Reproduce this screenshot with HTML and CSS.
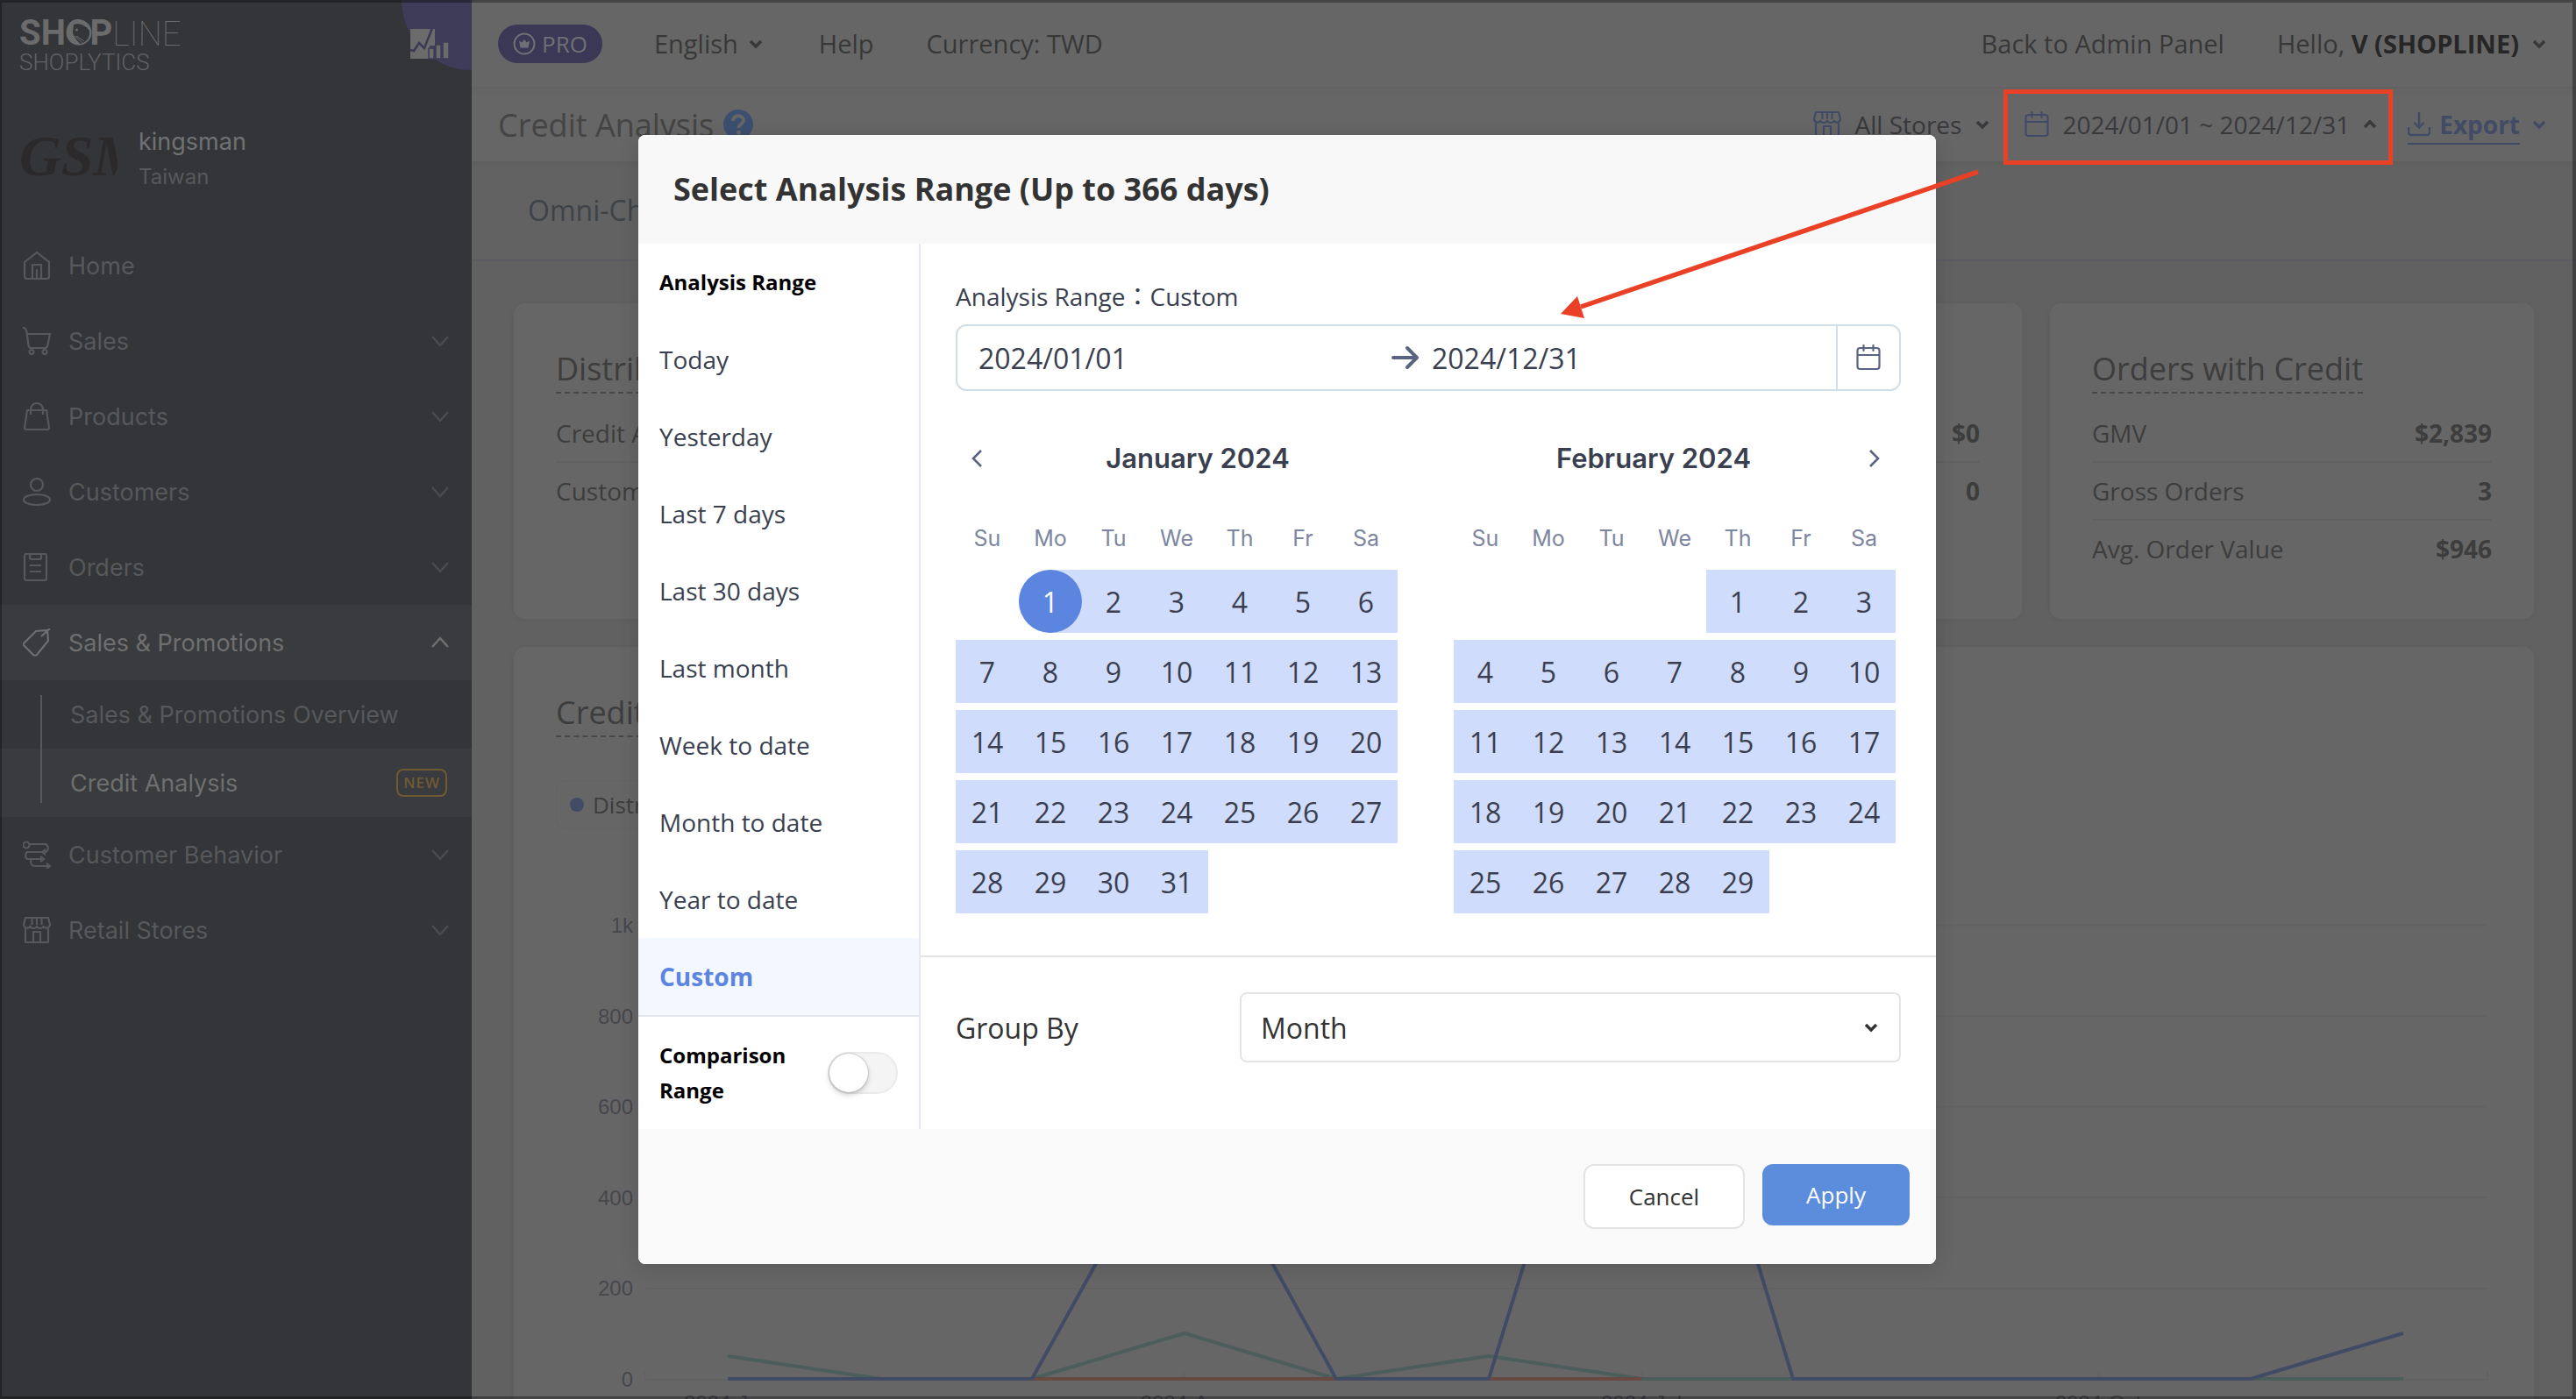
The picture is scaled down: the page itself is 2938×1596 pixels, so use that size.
FILE: index.html
```html
<!DOCTYPE html>
<html lang="en">
<head>
<meta charset="utf-8">
<title>Credit Analysis - Shoplytics</title>
<link rel="stylesheet" href="styles.css">
</head>
<body>
<svg class="defs" aria-hidden="true">
  <symbol id="chev-down" viewBox="0 0 20 20"><path d="M1 5l9 10 9-10" fill="none" stroke="currentColor" stroke-width="2.5"/></symbol>
  <symbol id="chev-up" viewBox="0 0 20 20"><path d="M1 15l9-10 9 10" fill="none" stroke="currentColor" stroke-width="2.5"/></symbol>
  <symbol id="caret-down" viewBox="0 0 16 16"><path d="M2 5l6 6 6-6" fill="none" stroke="currentColor" stroke-width="3.4"/></symbol>
  <symbol id="caret-up" viewBox="0 0 16 16"><path d="M2 11l6-6 6 6" fill="none" stroke="currentColor" stroke-width="3.4"/></symbol>
  <symbol id="store" viewBox="0 0 32 32"><g fill="none" stroke="currentColor" stroke-width="2.2" stroke-linejoin="round"><path d="M3 2h26l2 8a4.200 4.200 0 0 1-7.500 2 4.500 4.500 0 0 1-7.500 0 4.500 4.500 0 0 1-7.500 0A4.200 4.200 0 0 1 1 10z"/><path d="M10.500 2v8M16 2v8M21.500 2v8M3 14v16h26V14M12 30V18h8v12"/></g></symbol>
  <symbol id="calendar" viewBox="0 0 28 30"><g fill="none" stroke="currentColor" stroke-width="2.200" stroke-linecap="round"><rect x="1.500" y="4" width="25" height="24" rx="3"/><path d="M2 12h24M8.500 1v6M19.500 1v6"/></g></symbol>
</svg>

<div class="app">
  <aside class="sidebar">
    <header class="side-head">
      <div class="logo">
        <div class="logo-main"><b>SHOP</b><span>LINE</span><svg class="face" viewBox="0 0 30 30" aria-hidden="true"><circle cx="15" cy="15" r="14.500" fill="#6b6b6c"/><path d="M9 6c5-2 13 0 18 7 1 7-3 13-10 15-3-2-7-7-9-12z" fill="#343538"/><circle cx="12.500" cy="12" r="1.500" fill="#6b6b6c"/><path d="M10 19l9 8M12 19l9 6" stroke="#6b6b6c"/></svg></div>
        <div class="logo-sub">SHOPLYTICS</div>
      </div>
      <svg class="corner" viewBox="0 0 80 80" aria-hidden="true">
        <path d="M0 0h80v80C36 80 0 44 0 0z" fill="#3e3c58"/>
        <path d="M10 33h28v19h-6v15H10z" fill="#6b6b6c"/>
        <path d="M10 57l4 1 6-9 6 6 9-23" fill="none" stroke="#3c3a56" stroke-width="2.500"/>
        <path d="M31 55h6v12h-6zM39 51h6v16h-6zM47 48h7v19h-7z" fill="#6b6b6c" stroke="#3e3c58" stroke-width="1.500"/>
      </svg>
    </header>
    <div class="brand">
      <div class="brand-pic">GSM</div>
      <div><div class="brand-name">kingsman</div><div class="brand-place">Taiwan</div></div>
    </div>
    <nav>
      <a class="item" href="#"><svg class="ico" viewBox="0 0 32 32"><path d="M2 12L16 1l14 11v16a3 3 0 0 1-3 3H5a3 3 0 0 1-3-3zM11 31V15h10v16M16 20v11" /></svg><span>Home</span></a>
      <a class="item" href="#"><svg class="ico" viewBox="0 0 32 32"><path d="M0 1c3 0 4 2 4.500 5l2 15c.2 2 1 3 3 3H25c2 0 3-1 3.300-3L31 8H5"/><circle cx="10" cy="28.500" r="2.500"/><circle cx="25" cy="28.500" r="2.500"/></svg><span>Sales</span><svg class="chev"><use href="#chev-down"/></svg></a>
      <a class="item" href="#"><svg class="ico" viewBox="0 0 32 32"><path d="M5 9h22l3 20a2 2 0 0 1-2 2H4a2 2 0 0 1-2-2zM9 14V8a7 7 0 0 1 14 0v6"/></svg><span>Products</span><svg class="chev"><use href="#chev-down"/></svg></a>
      <a class="item" href="#"><svg class="ico" viewBox="0 0 32 32"><circle cx="16" cy="8" r="7"/><ellipse cx="16" cy="25" rx="15" ry="6"/></svg><span>Customers</span><svg class="chev"><use href="#chev-down"/></svg></a>
      <a class="item" href="#"><svg class="ico" viewBox="0 0 32 32"><rect x="2" y="1" width="25" height="30" rx="2"/><path d="M8 1v4a2 2 0 0 0 2 2h9a2 2 0 0 0 2-2V1M8 14h13M8 21h13"/></svg><span>Orders</span><svg class="chev"><use href="#chev-down"/></svg></a>
      <a class="item open" href="#"><svg class="ico" viewBox="0 0 32 32"><path d="M1 17L15 3l13-1 1 12-13 16c-1 1-3 1-4 0L1 19c-1-1-1-1 0-2zM31 0L21 9"/></svg><span>Sales &amp; Promotions</span><svg class="chev"><use href="#chev-up"/></svg></a>
      <div class="submenu">
        <a class="sub" href="#">Sales &amp; Promotions Overview</a>
        <a class="sub current" href="#">Credit Analysis<span class="new">NEW</span></a>
      </div>
      <a class="item" href="#"><svg class="ico" viewBox="0 0 32 32"><circle cx="4" cy="5" r="3.500"/><path d="M8 4h18a5 5 0 0 1 0 9h-3M26 10l-4 3 4 3M21 13H5a5 5 0 0 0 0 8h18M20 18l4 3-4 3M9 21c0 6 1 8 5 8h16M27 26l4 3-4 3"/></svg><span>Customer Behavior</span><svg class="chev"><use href="#chev-down"/></svg></a>
      <a class="item" href="#"><svg class="ico"><use href="#store"/></svg><span>Retail Stores</span><svg class="chev"><use href="#chev-down"/></svg></a>
    </nav>
  </aside>

  <main class="main">
    <div class="topbar">
      <span class="pro"><svg width="26" height="26" viewBox="0 0 26 26"><circle cx="13" cy="13" r="11.500" fill="none" stroke="currentColor" stroke-width="2"/><path d="M7 9.500l3.300 2L13 8l2.700 3.500 3.300-2-1.500 8h-9z" fill="currentColor"/></svg>PRO</span>
      <button class="plain lang">English<svg class="caret"><use href="#caret-down"/></svg></button>
      <a class="help" href="#">Help</a>
      <span>Currency: TWD</span>
      <a class="push" href="#">Back to Admin Panel</a>
      <button class="plain user"><span>Hello, <b>V (SHOPLINE)</b></span><svg class="caret"><use href="#caret-down"/></svg></button>
    </div>
    <div class="titlebar">
      <h1>Credit Analysis</h1>
      <svg class="q" viewBox="0 0 34 34" aria-hidden="true"><circle cx="17" cy="17" r="17" fill="#3d4f70"/><path d="M11 13c0-8 12-7 12-.5 0 4-5.500 4-5.500 8.500" fill="none" stroke="#666" stroke-width="4"/><circle cx="17.500" cy="26" r="2.600" fill="#666"/></svg>
      <button class="plain stores"><svg class="i32"><use href="#store"/></svg>All Stores<svg class="caret"><use href="#caret-down"/></svg></button>
      <button class="plain dates"><svg class="i28"><use href="#calendar"/></svg>2024/01/01 ~ 2024/12/31<svg class="caret"><use href="#caret-up"/></svg></button>
      <button class="plain export"><span class="export-label"><svg class="i26" viewBox="0 0 26 30"><path d="M13 1v17M7.500 13l5.500 5.500 5.500-5.500M1 18v6a3 3 0 0 0 3 3h18a3 3 0 0 0 3-3v-6" fill="none" stroke="currentColor" stroke-width="2.400"/></svg>Export</span><svg class="caret"><use href="#caret-down"/></svg></button>
    </div>
    <div class="tabs"><a href="#">Omni-Channel</a></div>
    <div class="content">
      <section class="card wide">
        <h2>Distribution</h2>
        <ul class="stats"><li>Credit Amount<b>$0</b></li><li>Customers<b>0</b></li></ul>
      </section>
      <section class="card">
        <h2>Orders with Credit</h2>
        <ul class="stats"><li>GMV<b>$2,839</b></li><li>Gross Orders<b>3</b></li><li>Avg. Order Value<b>$946</b></li></ul>
      </section>
      <section class="card full">
        <h2>Credit Trend</h2>
        <div class="legend"><i></i>Distribution</div>
        <svg class="chart" viewBox="0 0 2208 620" role="img" aria-label="Credit trend by month">
          <path d="M101 25.500H2203M101 129H2203M101 232.500H2203M101 336H2203M101 440H2203M101 544H2203M101.500 544v-10M716.500 544v-10M1238.500 544v-10M1759.500 544v-10M2203 544v-10" stroke="#626262" stroke-width="1.500" fill="none"/>
          <g class="ylab"><text x="88" y="34">1k</text><text x="88" y="138">800</text><text x="88" y="241">600</text><text x="88" y="345">400</text><text x="88" y="448">200</text><text x="88" y="552">0</text></g>
          <g class="xlab"><text x="196" y="579">2024-Jan</text><text x="716" y="579">2024-Apr</text><text x="1238" y="579">2024-Jul</text><text x="1759" y="579">2024-Oct</text></g>
          <g fill="none" stroke-width="4" stroke-linejoin="bevel">
            <path d="M196 543H2107" stroke="#684a43"/>
            <path d="M196 517L370 543H543L717 491 890 543 1064 517 1238 543H2107" stroke="#4b5e5b"/>
            <path d="M543 543H890M1064 543H1238" stroke="#684a43"/>
            <path d="M196 543H543L717 230 890 543H1064L1238 -24 1411 543H1933L2107 491" stroke="#414b66"/>
          </g>
        </svg>
      </section>
    </div>
  </main>
</div>

<dialog class="modal" open aria-labelledby="dlg-title">
  <header class="modal-head"><h2 id="dlg-title">Select Analysis Range (Up to 366 days)</h2></header>
  <div class="modal-body">
    <div class="ranges">
      <h3>Analysis Range</h3>
      <button class="range">Today</button>
      <button class="range">Yesterday</button>
      <button class="range">Last 7 days</button>
      <button class="range">Last 30 days</button>
      <button class="range">Last month</button>
      <button class="range">Week to date</button>
      <button class="range">Month to date</button>
      <button class="range">Year to date</button>
      <button class="range active">Custom</button>
      <div class="compare"><label for="cmp">Comparison Range</label><input class="switch" id="cmp" type="checkbox" role="switch"></div>
    </div>
    <div class="picker">
      <div class="picker-top">
        <label class="picked" for="from">Analysis Range：Custom</label>
        <div class="field">
          <input id="from" type="text" value="2024/01/01">
          <svg class="arrow" viewBox="0 0 32 28"><path d="M2 14h27M18 3l11 11-11 11" fill="none" stroke="#5a6482" stroke-width="4" stroke-linecap="round" stroke-linejoin="round"/></svg>
          <input id="to" class="to" type="text" value="2024/12/31" aria-label="End date">
          <button class="cal-btn" aria-label="Open calendar"><svg class="i28"><use href="#calendar"/></svg></button>
        </div>
        <div class="months">
          <section>
            <div class="month-head"><button class="nav" aria-label="Previous month"><svg width="16" height="22" viewBox="0 0 16 22"><path d="M13 2L4 11l9 9"/></svg></button><h3>January 2024</h3></div>
            <table>
              <thead><tr><th>Su</th><th>Mo</th><th>Tu</th><th>We</th><th>Th</th><th>Fr</th><th>Sa</th></tr></thead>
              <tbody>
                <tr><td></td><td class="in first"><button>1</button></td><td class="in"><button>2</button></td><td class="in"><button>3</button></td><td class="in"><button>4</button></td><td class="in"><button>5</button></td><td class="in"><button>6</button></td></tr>
                <tr><td class="in"><button>7</button></td><td class="in"><button>8</button></td><td class="in"><button>9</button></td><td class="in"><button>10</button></td><td class="in"><button>11</button></td><td class="in"><button>12</button></td><td class="in"><button>13</button></td></tr>
                <tr><td class="in"><button>14</button></td><td class="in"><button>15</button></td><td class="in"><button>16</button></td><td class="in"><button>17</button></td><td class="in"><button>18</button></td><td class="in"><button>19</button></td><td class="in"><button>20</button></td></tr>
                <tr><td class="in"><button>21</button></td><td class="in"><button>22</button></td><td class="in"><button>23</button></td><td class="in"><button>24</button></td><td class="in"><button>25</button></td><td class="in"><button>26</button></td><td class="in"><button>27</button></td></tr>
                <tr><td class="in"><button>28</button></td><td class="in"><button>29</button></td><td class="in"><button>30</button></td><td class="in"><button>31</button></td><td></td><td></td><td></td></tr>
              </tbody>
            </table>
          </section>
          <section>
            <div class="month-head"><h3>February 2024</h3><button class="nav" aria-label="Next month"><svg width="16" height="22" viewBox="0 0 16 22"><path d="M3 2l9 9-9 9"/></svg></button></div>
            <table>
              <thead><tr><th>Su</th><th>Mo</th><th>Tu</th><th>We</th><th>Th</th><th>Fr</th><th>Sa</th></tr></thead>
              <tbody>
                <tr><td></td><td></td><td></td><td></td><td class="in"><button>1</button></td><td class="in"><button>2</button></td><td class="in"><button>3</button></td></tr>
                <tr><td class="in"><button>4</button></td><td class="in"><button>5</button></td><td class="in"><button>6</button></td><td class="in"><button>7</button></td><td class="in"><button>8</button></td><td class="in"><button>9</button></td><td class="in"><button>10</button></td></tr>
                <tr><td class="in"><button>11</button></td><td class="in"><button>12</button></td><td class="in"><button>13</button></td><td class="in"><button>14</button></td><td class="in"><button>15</button></td><td class="in"><button>16</button></td><td class="in"><button>17</button></td></tr>
                <tr><td class="in"><button>18</button></td><td class="in"><button>19</button></td><td class="in"><button>20</button></td><td class="in"><button>21</button></td><td class="in"><button>22</button></td><td class="in"><button>23</button></td><td class="in"><button>24</button></td></tr>
                <tr><td class="in"><button>25</button></td><td class="in"><button>26</button></td><td class="in"><button>27</button></td><td class="in"><button>28</button></td><td class="in"><button>29</button></td><td></td><td></td></tr>
              </tbody>
            </table>
          </section>
        </div>
      </div>
      <div class="group">
        <label for="group">Group By</label>
        <div class="select"><select id="group"><option>Month</option><option>Day</option></select><svg class="caret"><use href="#caret-down"/></svg></div>
      </div>
    </div>
  </div>
  <footer class="modal-foot"><button class="cancel">Cancel</button><button class="apply">Apply</button></footer>
</dialog>

<svg class="note" viewBox="0 0 950 270" aria-hidden="true">
  <rect x="507.500" y="2.500" width="439" height="81" fill="none" stroke="#ea4025" stroke-width="5"/>
  <path d="M476 94L23 248" stroke="#ea4025" stroke-width="5.500"/>
  <path d="M0 256l19-20 8 25z" fill="#ea4025"/>
</svg>
<div class="frame"></div>
</body>
</html>
```
FILE: styles.css
```css
* { box-sizing: border-box; }
html, body { height: 100%; margin: 0; overflow: hidden; }
body { font: 28px "Open Sans", "Noto Sans CJK TC", sans-serif; background: #616161; color: #383838; }
button, input, select { font: inherit; color: inherit; }
button { border: 0; padding: 0; background: none; }
a { color: inherit; text-decoration: none; }
h1, h2, h3, ul { margin: 0; padding: 0; font-weight: 400; }
svg { display: block; flex: none; }
.defs { position: absolute; width: 0; height: 0; }
.app { display: flex; height: 100%; overflow: hidden; }

/* sidebar */
.sidebar { flex: none; width: 538px; background: #343538; color: #57585b; font-family: Inter, sans-serif; font-size: 27px; }
.side-head { display: flex; justify-content: space-between; height: 132px; padding-left: 22px; }
.logo { padding-top: 18px; }
.logo-main { position: relative; display: flex; font: 40px/40px Roboto, sans-serif; color: #6b6b6c; }
.logo-main span { font-size: 38px; line-height: 42px; font-weight: 100; }
.face { position: absolute; left: 53px; top: 4px; width: 30px; height: 30px; }
.logo-sub { font: 300 26px/22px Roboto, sans-serif; color: #606163; }
.corner { width: 80px; height: 80px; }
.brand { display: flex; align-items: center; gap: 24px; height: 100px; margin-bottom: 28px; padding-left: 22px; }
.brand-pic { align-self: flex-start; width: 112px; overflow: hidden; font: italic bold 66px/92px "Liberation Serif", serif; color: #2b292a; }
.brand-name { line-height: 40px; color: #707173; }
.brand-place { font-size: 24px; line-height: 40px; }
.item { display: flex; align-items: center; height: 86px; padding: 0 26px; }
.item span { margin: 0 auto 0 20px; }
.ico { width: 32px; height: 32px; fill: none; stroke: currentColor; stroke-width: 2.2; }
.chev { width: 20px; height: 20px; }
.item:not(.open) .chev { color: #4b4c4f; }
.open, .current { background: #3a3b3e; color: #6f6f6f; }
.submenu { position: relative; }
.submenu::before { content: ""; position: absolute; left: 46px; top: 17px; bottom: 16px; width: 2px; background: #57585b; }
.sub { display: flex; align-items: center; justify-content: space-between; height: 78px; padding: 0 28px 0 80px; }
.new { padding: 0 6px; border: 2px solid #705a34; border-radius: 8px; font: 600 17px/28px "Open Sans", sans-serif; letter-spacing: 1px; color: #705a34; }

/* main column */
.main { flex: 1; min-width: 0; background: #616161; }
.plain { display: flex; align-items: center; }
.caret { width: 16px; height: 16px; }
.i32 { width: 32px; height: 32px; color: #414b66; }
.i28 { width: 28px; height: 30px; color: #414b66; }
.i26 { width: 26px; height: 30px; }
.topbar { display: flex; align-items: center; height: 100px; padding: 0 34px 0 30px; background: #666; border-bottom: 1px solid #616161; font-size: 29px; }
.pro { display: flex; align-items: center; gap: 7px; height: 44px; padding: 0 17px; border-radius: 22px; background: #3a3855; color: #706f78; font-size: 26px; }
.lang { gap: 12px; margin: 0 64px 0 59px; }
.help { margin-right: 60px; }
.push { margin: 0 60px 0 auto; }
.user { gap: 15px; }
.user b { color: #262626; }
.titlebar { display: flex; align-items: center; height: 84px; padding: 0 34px 0 30px; background: linear-gradient(#646464, #666 12px); color: #38393c; }
h1 { margin-right: 11px; font-size: 36px; color: #444; }
.q { width: 34px; height: 34px; }
.stores { gap: 16px; margin-left: auto; }
.dates { gap: 15px; margin: 0 35px 0 40px; }
.export { gap: 14px; font-weight: 700; color: #414b66; }
.export-label { display: flex; align-items: center; gap: 10px; margin-top: 2px; border-bottom: 2px solid; line-height: 42px; }
.tabs { height: 114px; padding-left: 64px; border-bottom: 2px solid #5b5b62; background: linear-gradient(#5e5e5e, #626262 8px); font-size: 32px; line-height: 112px; color: #3e4249; }
.content { display: grid; grid-template-columns: repeat(4, minmax(0, 1fr)); gap: 32px; padding: 48px; }
.card { min-height: 360px; padding: 49px 48px 45px; border-radius: 12px; background: #666; box-shadow: 0 1px 4px #5d5d5d; color: #3d3d3d; }
.wide { grid-column: span 3; }
.full { grid-column: 1 / -1; }
.card h2 { width: fit-content; border-bottom: 2px dashed #484848; font-size: 36px; line-height: 52px; }
.stats { margin-top: 13px; list-style: none; }
.stats li { display: flex; justify-content: space-between; height: 66px; border-bottom: 2px solid #606060; line-height: 64px; }
.stats li:last-child { border: 0; }
.legend { display: flex; align-items: center; gap: 10px; width: fit-content; height: 56px; margin: 49px 0 84px; padding: 0 15px; border: 1px solid #636363; border-radius: 12px; font-size: 26px; }
.legend i { width: 16px; height: 16px; border-radius: 50%; background: #414b66; }
.chart { width: 100%; }
.ylab { font: 24px "Liberation Sans", sans-serif; fill: #46464d; text-anchor: end; }
.xlab { font: 24px "Liberation Sans", sans-serif; fill: #46464d; text-anchor: middle; }

/* dialog */
.modal { position: absolute; top: 154px; left: 0; right: 2px; width: 1480px; margin: 0 auto; padding: 0; border: 0; border-radius: 8px; overflow: hidden; background: #fff; color: #3a3f50; box-shadow: 0 4px 24px #0002; }
.modal-head { padding: 0 40px; background: #f8f8f8; }
.modal-head h2 { font-size: 36px; font-weight: 700; line-height: 124px; color: #333; }
.modal-body { display: flex; }
.ranges { display: flex; flex-direction: column; flex: none; width: 322px; border-right: 2px solid #e6e8ef; }
.ranges h3 { padding-left: 24px; font-size: 24px; font-weight: 700; line-height: 88px; color: #000; }
.range { height: 88px; padding-left: 24px; text-align: left; }
.active { background: #f3f7ff; font-weight: 700; color: #5b85df; }
.compare { display: flex; align-items: center; justify-content: space-between; padding: 24px; border-top: 2px solid #e6e8ef; font-size: 24px; font-weight: 700; line-height: 40px; color: #000; }
.compare label { width: 170px; }
.switch { appearance: none; width: 80px; height: 48px; margin: 0; border: 2px solid #ebebeb; border-radius: 24px; background: #f4f4f4; }
.switch::before { content: ""; display: block; width: 44px; height: 44px; border-radius: 50%; background: #fff; box-shadow: 0 3px 6px #0003, 0 0 2px #0005; }
.picker { flex: 1; min-width: 0; }
.picker-top { padding: 40px; }
.picked { display: block; height: 42px; margin-bottom: 10px; line-height: 40px; }
.field { display: flex; align-items: center; height: 76px; border: 2px solid #d3dde6; border-radius: 12px; font-size: 32px; }
.field input { flex: 1; min-width: 0; height: 100%; padding: 0 24px; border: 0; background: none; }
.field .to { padding: 0 14px; }
.arrow { width: 32px; height: 28px; }
.cal-btn { display: flex; align-items: center; justify-content: center; width: 72px; height: 100%; border-left: 2px solid #d3dde6; }
.cal-btn svg { color: #5a6482; }
.months { display: flex; gap: 64px; margin-top: 42px; }
.month-head { display: flex; align-items: center; height: 82px; padding-bottom: 13px; }
.month-head h3 { flex: 1; text-align: center; font: 600 31px Inter, sans-serif; }
.nav { display: flex; justify-content: center; width: 48px; }
.nav path { fill: none; stroke: #5a6482; stroke-width: 2.6; }
table { width: 504px; table-layout: fixed; border-collapse: separate; border-spacing: 0 8px; }
th { height: 64px; padding: 8px 0 0; font: 25px Inter, sans-serif; color: #7c86a0; }
td { height: 72px; padding: 0; }
td button { display: block; width: 72px; height: 72px; font-size: 32px; }
.in { background: #d0dcfb; }
.first { border-radius: 36px 0 0 36px; }
.first button { border-radius: 50%; background: #5b85df; color: #fff; }
.group { display: flex; align-items: center; padding: 40px 40px 76px; border-top: 2px solid #e2e3e5; font-size: 32px; color: #333; }
.group label { width: 324px; }
.select { position: relative; flex: 1; }
.select select { display: block; appearance: none; width: 100%; height: 80px; padding: 0 22px; border: 2px solid #e3e4e5; border-radius: 8px; background: #fff; }
.select .caret { position: absolute; right: 26px; top: 32px; }
.modal-foot { display: flex; justify-content: flex-end; gap: 20px; height: 154px; padding: 40px 30px; background: #fafafa; font-size: 26px; }
.cancel { width: 184px; height: 74px; border: 2px solid #e3e4e5; border-radius: 12px; background: #fff; color: #333; }
.apply { width: 168px; height: 70px; border-radius: 12px; background: #5b8ddc; color: #fff; }

/* callout above the dialog, and the window edge */
.note { position: absolute; top: 102px; right: 208px; width: 950px; height: 270px; pointer-events: none; }
.frame { position: fixed; inset: 0; border: solid rgba(0, 0, 0, .33); border-width: 3px 4px 3px 2px; pointer-events: none; }
```
